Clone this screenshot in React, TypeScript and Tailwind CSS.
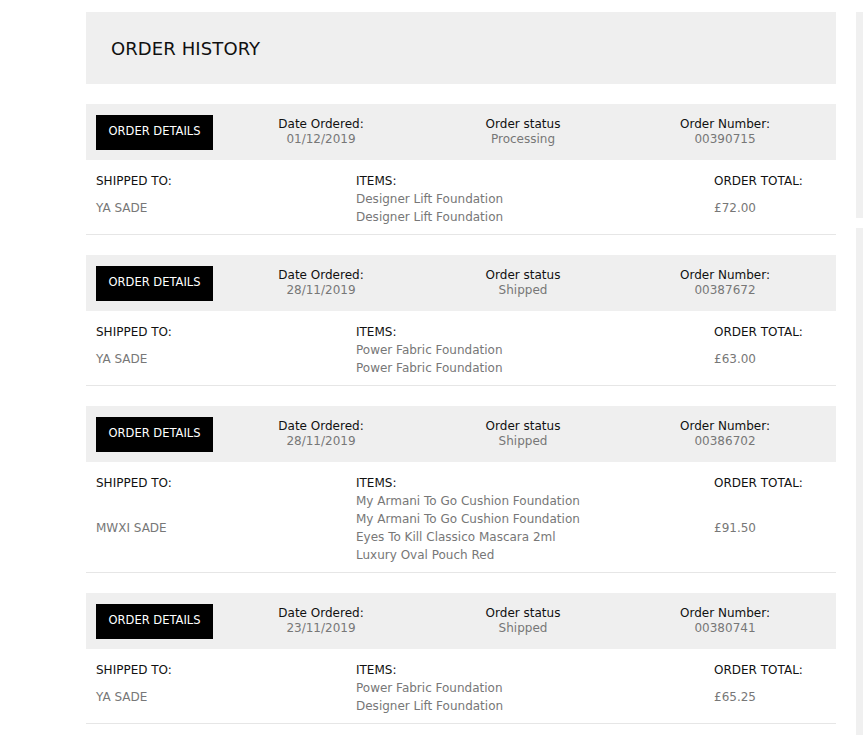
import React from 'react';

type Order = {
  date: string;
  status: string;
  number: string;
  shippedTo: string;
  items: string[];
  total: string;
};

const orders: Order[] = [
  {
    date: '01/12/2019',
    status: 'Processing',
    number: '00390715',
    shippedTo: 'YA SADE',
    items: ['Designer Lift Foundation', 'Designer Lift Foundation'],
    total: '£72.00',
  },
  {
    date: '28/11/2019',
    status: 'Shipped',
    number: '00387672',
    shippedTo: 'YA SADE',
    items: ['Power Fabric Foundation', 'Power Fabric Foundation'],
    total: '£63.00',
  },
  {
    date: '28/11/2019',
    status: 'Shipped',
    number: '00386702',
    shippedTo: 'MWXI SADE',
    items: [
      'My Armani To Go Cushion Foundation',
      'My Armani To Go Cushion Foundation',
      'Eyes To Kill Classico Mascara 2ml',
      'Luxury Oval Pouch Red',
    ],
    total: '£91.50',
  },
  {
    date: '23/11/2019',
    status: 'Shipped',
    number: '00380741',
    shippedTo: 'YA SADE',
    items: ['Power Fabric Foundation', 'Designer Lift Foundation'],
    total: '£65.25',
  },
];

function HeaderField({ label, value }: { label: string; value: string }) {
  return (
    <div className="flex flex-col items-center leading-[15px]">
      <span className="text-[12px] text-[#111]">{label}</span>
      <span className="text-[12px] text-[#777]">{value}</span>
    </div>
  );
}

function OrderCard({ order }: { order: Order }) {
  return (
    <div className="flex flex-col">
      <div className="h-[56px] bg-[#efefef] flex items-center pl-[10px]">
        <button className="w-[117px] h-[35px] bg-black text-white text-[11.5px] flex items-center justify-center">
          ORDER DETAILS
        </button>
        <div className="grid grid-cols-[202px_202px_202px] pl-[7px]">
          <HeaderField label="Date Ordered:" value={order.date} />
          <HeaderField label="Order status" value={order.status} />
          <HeaderField label="Order Number:" value={order.number} />
        </div>
      </div>
      <div className="grid grid-cols-[260px_358px_1fr] pl-[10px] pt-[12px] pb-[8px] border-b border-[#e6e6e6] text-[12px]">
        <div className="text-[#111] leading-[18px]">SHIPPED TO:</div>
        <div className="text-[#111] leading-[18px]">ITEMS:</div>
        <div className="text-[#111] leading-[18px]">ORDER TOTAL:</div>
        <div className="text-[#777] self-center leading-[18px]">{order.shippedTo}</div>
        <div className="flex flex-col text-[#777] leading-[18px]">
          {order.items.map((item, i) => (
            <span key={i}>{item}</span>
          ))}
        </div>
        <div className="text-[#777] self-center leading-[18px]">{order.total}</div>
      </div>
    </div>
  );
}

export default function App() {
  return (
    <div
      className="w-[863px] h-[735px] overflow-hidden bg-white flex"
      style={{ fontFamily: '"DejaVu Sans", sans-serif' }}
    >
      <div className="w-[750px] ml-[86px] pt-[12px] flex flex-col gap-[20px]">
        <div className="h-[72px] bg-[#efefef] flex items-center pl-[25px]">
          <h1 className="text-[18px] text-[#111] tracking-[0.1px]">ORDER HISTORY</h1>
        </div>
        {orders.map((o, i) => (
          <OrderCard key={i} order={o} />
        ))}
      </div>
      <div className="ml-[20px] flex flex-col pt-[12px] gap-[10px]">
        <div className="w-[7px] h-[206px] bg-[#f0f0f0]" />
        <div className="w-[7px] flex-1 bg-[#f0f0f0]" />
      </div>
    </div>
  );
}
